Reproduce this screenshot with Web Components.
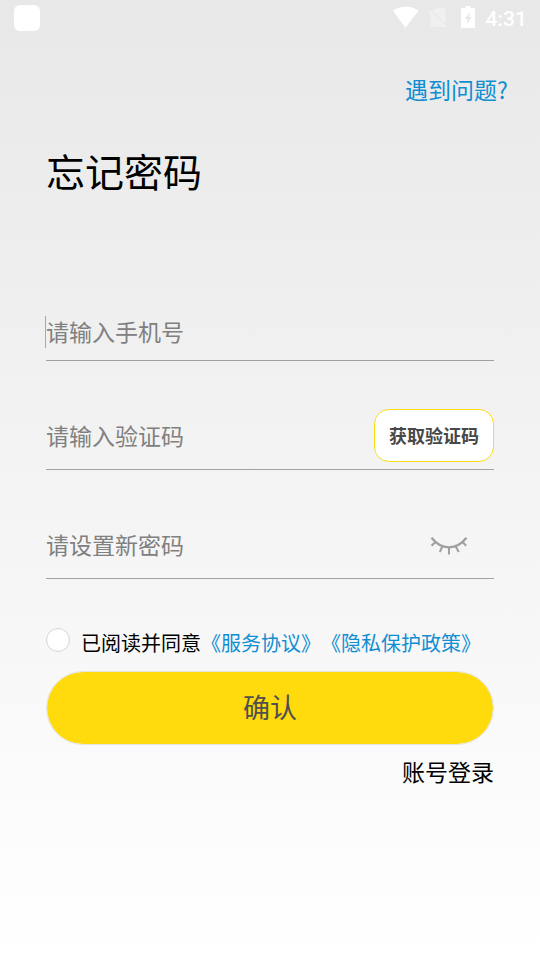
<!DOCTYPE html>
<html lang="zh-CN">
<head>
<meta charset="utf-8">
<title>忘记密码</title>
<style>
  html, body {
    margin: 0;
    height: 100%;
  }
  body {
    font-family: "Noto Sans CJK SC", sans-serif;
    overflow: hidden;
  }
</style>
</head>
<body>
<forgot-password-page></forgot-password-page>

<script>
class StatusBar extends HTMLElement {
  constructor() {
    super();
    this.attachShadow({ mode: "open" });
  }

  static get styles() {
    return /* css */`
      :host {
        display: flex;
        align-items: flex-start;
        justify-content: space-between;
        box-sizing: border-box;
        height: 36px;
        padding: 5px 13px 0 14px;
        color: #fff;
      }
      .app {
        width: 26px;
        height: 26px;
        border-radius: 6px;
        background: #fff;
      }
      .icons {
        display: flex;
        align-items: flex-start;
      }
      svg { display: block; }
      .time {
        width: 41.5px;
        font: 500 21px/26px Roboto, sans-serif;
        margin: 1px 0 0 9.5px;
      }
    `;
  }

  connectedCallback() {
    this.shadowRoot.innerHTML = /* html */`
      <style>${StatusBar.styles}</style>
      <div class="app"></div>
      <div class="icons">
        <svg width="92" height="26" viewBox="0 0 92 26">
          <path fill="#fff" d="M9 5.700C16 .5 27.500.5 34.500 5.700L21.500 22.700Z"/>
          <path fill="#fff" fill-opacity=".35" d="M51 3.300h8.800q1.700 0 1.700 1.700v13.700L48.200 6.100zM46.500 8.800 60.300 21.700H48q-1.500 0-1.500-1.500zM43.800 6.200 45.200 4.800 63 21.500 61.600 22.900Z"/>
          <path fill="#fff" fill-rule="evenodd" d="M81.500 1h5v2h3.700q.8 0 .8.8v18.400q0 .8-.8.8H77.800q-.8 0-.8-.8V3.800q0-.8.800-.8h3.700zM86 7 80.800 13.800H83.600L82.600 19.500 87.800 11.900H85Z"/>
        </svg>
        <div class="time"><slot></slot></div>
      </div>
    `;
  }
}

class FormField extends HTMLElement {
  constructor() {
    super();
    this.attachShadow({ mode: "open" });
  }

  static get styles() {
    return /* css */`
      :host {
        display: flex;
        align-items: center;
        justify-content: space-between;
        box-sizing: border-box;
        height: 66px;
        border-bottom: 1px solid #a2a2a2;
        color: #808080;
        font-size: 23px;
        line-height: 32px;
      }
      .caret {
        width: 1px;
        height: 32px;
        margin-left: -1px;
        background: #a8a8a8;
      }
      .text {
        flex: 1;
        padding-bottom: 4px;
      }
      :host(:not([focused])) .caret { display: none; }
      :host([focused]) .text { padding-bottom: 1px; }
    `;
  }

  connectedCallback() {
    this.shadowRoot.innerHTML = /* html */`
      <style>${FormField.styles}</style>
      <div class="caret"></div>
      <div class="text"><slot></slot></div>
      <slot name="action"></slot>
    `;
  }
}

class CodeButton extends HTMLElement {
  constructor() {
    super();
    this.attachShadow({ mode: "open" });
  }

  static get styles() {
    return /* css */`
      :host {
        display: block;
        box-sizing: border-box;
        width: 120px;
        height: 53px;
        border: 1px solid #ffdc14;
        border-radius: 15px;
        background: #fff;
        color: #484848;
        font-size: 18px;
        font-weight: 700;
        line-height: 51px;
        text-align: center;
      }
    `;
  }

  connectedCallback() {
    this.shadowRoot.innerHTML = /* html */`
      <style>${CodeButton.styles}</style>
      <slot></slot>
    `;
  }
}

class EyeToggle extends HTMLElement {
  constructor() {
    super();
    this.attachShadow({ mode: "open" });
  }

  connectedCallback() {
    this.shadowRoot.innerHTML = /* html */`
      <style>
        :host { display: block; }
        svg { display: block; }
      </style>
      <svg width="38" height="20" viewBox="0 0 38 20" fill="none" stroke="#a0a0a0" stroke-width="2">
        <path stroke-width="2.300" d="M1.500 2.800Q9 12.300 19 12.300T36.500 2.800"/>
        <path d="M5.500 7 1.500 10.800M12.500 11 9.800 17M19 12v7.500M25.500 11l3.200 6M32.500 7l3.700 3.800"/>
      </svg>
    `;
  }
}

class AgreementRow extends HTMLElement {
  constructor() {
    super();
    this.attachShadow({ mode: "open" });
  }

  static get styles() {
    return /* css */`
      :host {
        display: flex;
        align-items: flex-start;
        height: 30px;
        color: #000;
        font-size: 20px;
        line-height: 30px;
        white-space: nowrap;
        text-spacing-trim: space-all;
      }
      .radio {
        box-sizing: border-box;
        width: 24px;
        height: 24px;
        margin-right: 11px;
        border: 1px solid #d4d4d4;
        border-radius: 50%;
        background: #fff;
      }
      ::slotted(a) { color: #108ed3; }
    `;
  }

  connectedCallback() {
    this.shadowRoot.innerHTML = /* html */`
      <style>${AgreementRow.styles}</style>
      <div class="radio"></div>
      <div class="label"><slot></slot></div>
    `;
  }
}

class SubmitButton extends HTMLElement {
  constructor() {
    super();
    this.attachShadow({ mode: "open" });
  }

  static get styles() {
    return /* css */`
      :host {
        display: block;
        box-sizing: border-box;
        height: 74px;
        border: 1px solid #e6e4dc;
        border-radius: 37px;
        background: #ffda0c;
        background-clip: padding-box;
        color: #505050;
        font-size: 27px;
        line-height: 70px;
        text-align: center;
      }
    `;
  }

  connectedCallback() {
    this.shadowRoot.innerHTML = /* html */`
      <style>${SubmitButton.styles}</style>
      <slot></slot>
    `;
  }
}

class ForgotPasswordPage extends HTMLElement {
  constructor() {
    super();
    this.attachShadow({ mode: "open" });
  }

  static get styles() {
    return /* css */`
      :host {
        display: block;
        height: 100%;
        min-height: 960px;
        background: linear-gradient(#e8e8e8, #fff);
      }
      .help {
        padding: 36px 32px 0 0;
        color: #108ed3;
        font-size: 23px;
        line-height: 34px;
        text-align: right;
      }
      main {
        display: flex;
        flex-direction: column;
        padding: 0 46px;
      }
      h1 {
        margin: 36px 0 0;
        font-size: 39px;
        font-weight: 400;
        line-height: 56px;
      }
      .fields {
        display: flex;
        flex-direction: column;
        gap: 43px;
        margin-top: 97px;
      }
      .phone { height: 58px; margin-top: 8px; }
      code-button { margin-bottom: 2px; }
      eye-toggle { margin: 0 26px 1px 0; }
      agreement-row { margin-top: 49px; }
      submit-button { margin-top: 13px; }
      .login {
        margin-top: 9px;
        font-size: 23px;
        line-height: 34px;
        text-align: right;
      }
    `;
  }

  connectedCallback() {
    this.shadowRoot.innerHTML = /* html */`
      <style>${ForgotPasswordPage.styles}</style>
      <status-bar>4:31</status-bar>
      <div class="help">遇到问题?</div>
      <main>
        <h1>忘记密码</h1>
        <div class="fields">
          <form-field class="phone" focused>请输入手机号</form-field>
          <form-field>请输入验证码<code-button slot="action">获取验证码</code-button></form-field>
          <form-field>请设置新密码<eye-toggle slot="action"></eye-toggle></form-field>
        </div>
        <agreement-row>已阅读并同意<a>《服务协议》</a><a>《隐私保护政策》</a></agreement-row>
        <submit-button>确认</submit-button>
        <div class="login">账号登录</div>
      </main>
    `;
  }
}

customElements.define("status-bar", StatusBar);
customElements.define("form-field", FormField);
customElements.define("code-button", CodeButton);
customElements.define("eye-toggle", EyeToggle);
customElements.define("agreement-row", AgreementRow);
customElements.define("submit-button", SubmitButton);
customElements.define("forgot-password-page", ForgotPasswordPage);
</script>
</body>
</html>
